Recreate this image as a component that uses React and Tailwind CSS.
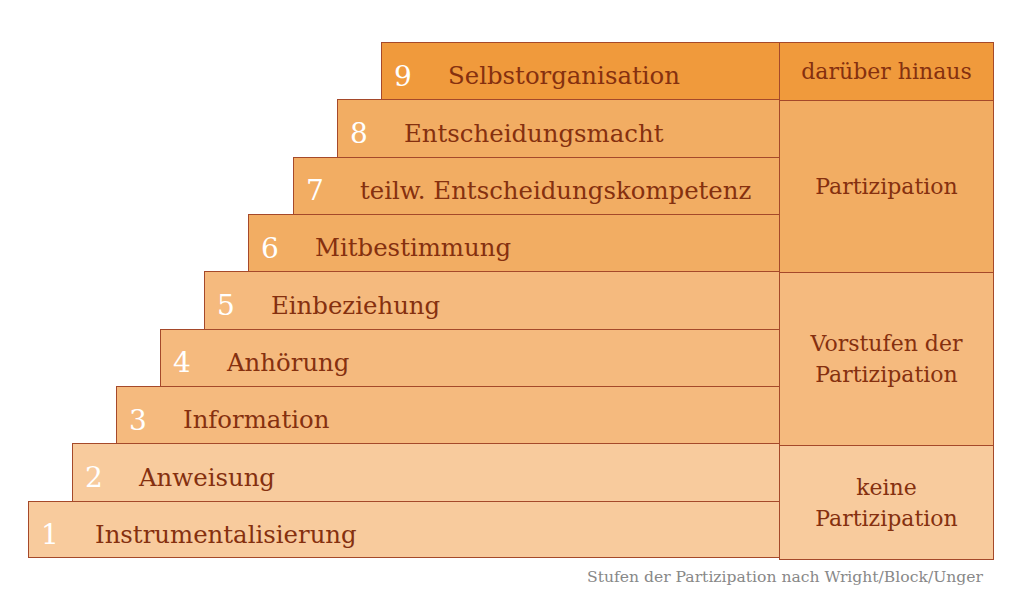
const steps = [
  { n: 9, label: "Selbstorganisation", bg: "bg-[#f09a3c]", ml: "ml-[353px]" },
  { n: 8, label: "Entscheidungsmacht", bg: "bg-[#f2ad63]", ml: "ml-[309px]" },
  { n: 7, label: "teilw. Entscheidungskompetenz", bg: "bg-[#f2ad63]", ml: "ml-[265px]" },
  { n: 6, label: "Mitbestimmung", bg: "bg-[#f2ad63]", ml: "ml-[220px]" },
  { n: 5, label: "Einbeziehung", bg: "bg-[#f5ba7e]", ml: "ml-[176px]" },
  { n: 4, label: "Anhörung", bg: "bg-[#f5ba7e]", ml: "ml-[132px]" },
  { n: 3, label: "Information", bg: "bg-[#f5ba7e]", ml: "ml-[88px]" },
  { n: 2, label: "Anweisung", bg: "bg-[#f8cb9d]", ml: "ml-[44px]" },
  { n: 1, label: "Instrumentalisierung", bg: "bg-[#f8cb9d]", ml: "ml-0" },
];

const groups = [
  { text: ["darüber hinaus"], bg: "bg-[#f09a3c]", h: "h-[57px]" },
  { text: ["Partizipation"], bg: "bg-[#f2ad63]", h: "h-[172px]" },
  { text: ["Vorstufen der", "Partizipation"], bg: "bg-[#f5ba7e]", h: "h-[173px]" },
  { text: ["keine", "Partizipation"], bg: "bg-[#f8cb9d]", h: "h-[114px]" },
];

export default function App() {
  return (
    <div
      className="w-[1024px] h-[603px] bg-white pt-[42px] pl-[28px]"
      style={{ fontFamily: '"DejaVu Serif", Georgia, serif' }}
    >
      <div className="flex w-[966px]">
        <div className="flex flex-col w-[751px]">
          {steps.map((s) => (
            <div
              key={s.n}
              className={`h-[57.33px] pt-[11px] flex items-center border-l border-t border-[#a5492a] ${s.bg} ${s.ml} ${s.n === 1 ? "border-b" : ""}`}
            >
              <span className="w-[66px] pl-[12px] text-[28px] text-white leading-none">
                {s.n}
              </span>
              <span className="text-[24.4px] text-[#85300f] leading-none">
                {s.label}
              </span>
            </div>
          ))}
        </div>
        <div className="flex flex-col w-[215px] border border-[#a5492a]">
          {groups.map((g, i) => (
            <div
              key={i}
              className={`${g.h} ${g.bg} flex flex-col items-center justify-center text-[#85300f] text-[22px] leading-[31px] ${i > 0 ? "border-t border-[#a5492a]" : ""}`}
            >
              {g.text.map((t) => (
                <span key={t}>{t}</span>
              ))}
            </div>
          ))}
        </div>
      </div>
      <div className="w-[955px] text-right text-[15.6px] text-[#888888] mt-[6px]">
        Stufen der Partizipation nach Wright/Block/Unger
      </div>
    </div>
  );
}
